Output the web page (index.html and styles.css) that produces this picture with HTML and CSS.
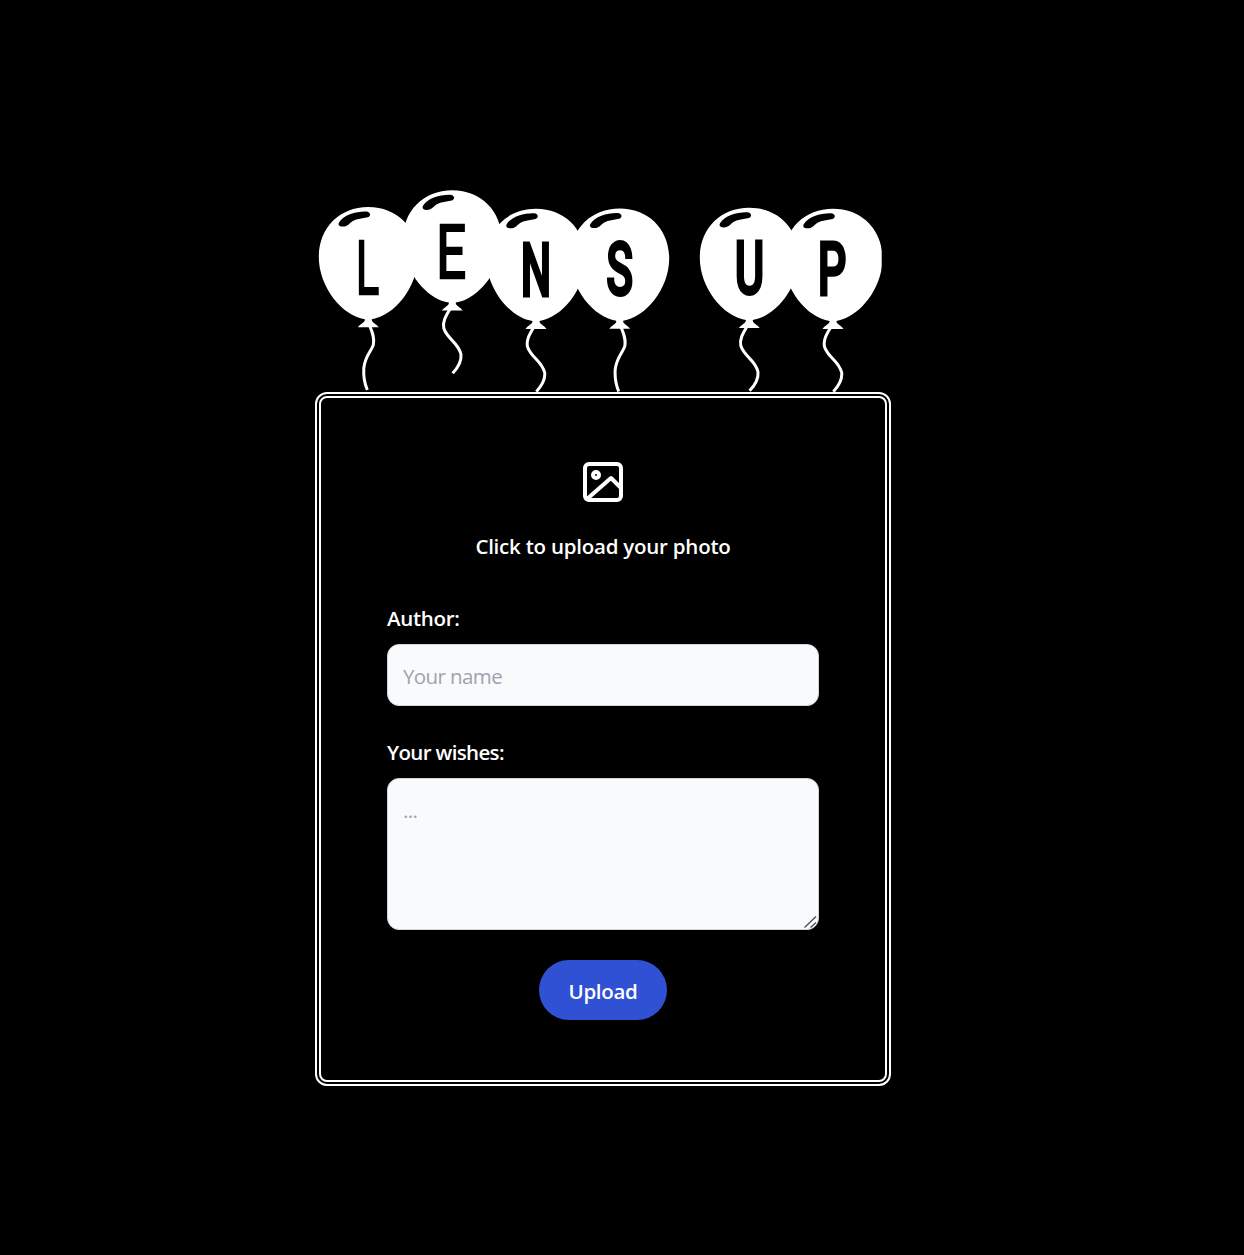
FILE: index.html
```html
<!DOCTYPE html>
<html lang="en">
<head>
<meta charset="utf-8">
<title>Lens Up</title>
<link rel="stylesheet" href="styles.css">
</head>
<body>
<main class="page">
  <svg class="logo" width="576" height="212" viewBox="315 180 576 212" role="img" aria-label="Lens Up">
    <defs>
      <g id="balloon">
        <path class="skin" d="M0 0C29 0 49.500 21 49.500 50C49.500 80 26 109 3.500 112.200C3 115.500 8 116.500 10.500 120.300H-10.500C-8 116.500 -3 115.500 -3.500 112.200C-26 109 -49.500 80 -49.500 50C-49.500 21 -29 0 0 0Z"/>
        <path class="ink" d="M-29.300 15.500C-25 8 -12 4.200 -2 4.500C2.500 4.900 3 9 -.5 10.200C-6 11.500 -11 11.500 -15.500 14C-19.500 17 -21 19.800 -26 19.600C-29.500 19.500 -30.300 17.500 -29.300 15.500Z"/>
      </g>
      <path id="string-right" class="string" d="M-2.500 119C-6 125 -10 131 -8.500 138C-5 149 6 152 8.700 164C9.500 172 5 178 .3 183"/>
      <path id="string-left" class="string" d="M1.500 119C4 125 6.500 131 5 138C2 146 -3 149 -4.500 161C-5 169 -3.500 177 -1 183"/>
      <clipPath id="edge"><rect x="315" y="180" width="566.700" height="212"/></clipPath>
    </defs>
    <g clip-path="url(#edge)">
      <g transform="translate(368.300 207)"><use href="#balloon"/><use href="#string-left"/></g>
      <g transform="translate(452.300 190.300)"><use href="#balloon"/><use href="#string-right"/></g>
      <g transform="translate(536 208.700)"><use href="#balloon"/><use href="#string-right"/></g>
      <g transform="translate(619.700 208.500)"><use href="#balloon"/><use href="#string-left"/></g>
      <g transform="translate(749.300 207.800)"><use href="#balloon"/><use href="#string-right"/></g>
      <g transform="translate(833 208.700)"><use href="#balloon"/><use href="#string-right"/></g>
    </g>
    <g class="letters">
      <text class="thin" transform="translate(367.500 294) scale(.58 1)">L</text>
      <text class="thin" transform="translate(451.300 277.700) scale(.71 1)">E</text>
      <text transform="translate(536 296) scale(.58 1)">N</text>
      <text transform="translate(619.700 294.800) scale(.6 1)">S</text>
      <text transform="translate(749.500 293.800) scale(.61 1)">U</text>
      <text transform="translate(832.200 295.300) scale(.61 1)">P</text>
    </g>
  </svg>
  <form class="card">
    <label class="picker">
      <svg width="48" height="48" viewBox="0 0 24 24" fill="none" stroke="currentColor" stroke-width="2" stroke-linejoin="round">
        <rect x="3" y="3" width="18" height="18" rx="2"/>
        <circle cx="8.500" cy="8.500" r="1.500"/>
        <path d="M21 15L16 10L4 20.500"/>
      </svg>
      <span class="picker-text">Click to upload your photo</span>
    </label>
    <label class="label author" for="author">Author:</label>
    <input class="field" id="author" type="text" placeholder="Your name">
    <label class="label wishes" for="wishes">Your wishes:</label>
    <div class="area">
      <textarea class="field" id="wishes" placeholder="..."></textarea>
      <svg class="grip" width="14" height="14" viewBox="0 0 14 14"><path d="M1.500 12.500L13 1.500M7.500 12.500L13 7.500"/></svg>
    </div>
    <button class="upload" type="button">Upload</button>
  </form>
</main>
</body>
</html>
```
FILE: styles.css
```css
* { box-sizing: border-box; }
body {
  margin: 0;
  background: #000;
  color: #fff;
  font: 600 20.5px/30px "Open Sans", "Noto Sans", sans-serif;
}
.page {
  width: 576px;
  min-height: 1255px;
  margin-left: 315px;
  padding-top: 180px;
}
.logo { display: block; }
.skin { fill: #fff; }
.ink, .letters { fill: #000; }
.string { fill: none; stroke: #fff; stroke-width: 3; }
.letters {
  font: 500 74px Roboto, sans-serif;
  text-anchor: middle;
}
.letters text {
  stroke: #000;
  stroke-width: 3px;
  stroke-linejoin: miter;
}
.letters .thin {
  font-weight: 400;
  stroke-width: 2.400px;
}
.card {
  display: flex;
  flex-direction: column;
  height: 694px;
  padding: 60px 66px;
  border: 6px double #fff;
  border-radius: 12px;
}
.picker {
  display: flex;
  flex-direction: column;
  align-items: center;
  gap: 25px;
}
.picker-text { letter-spacing: -.23px; }
.label { letter-spacing: -.3px; }
.author { margin-top: 42px; }
.wishes { margin-top: 31px; letter-spacing: -.65px; }
.field {
  display: block;
  width: 100%;
  height: 62px;
  margin: 11px 0 0;
  padding: 15px 15px 13px;
  border: 1px solid #d1d5db;
  border-radius: 12px;
  background: #f9fafb;
  color: #111827;
  font: 400 20.5px/30px "Open Sans", "Noto Sans", sans-serif;
  letter-spacing: -.6px;
  resize: none;
}
.field::placeholder { color: #9ca3af; opacity: 1; }
.area { position: relative; }
.area .field { height: 152px; padding-top: 16px; }
.grip {
  position: absolute;
  right: 2px;
  bottom: 1px;
  fill: none;
  stroke: #555;
  stroke-width: 1.5;
}
.upload {
  align-self: center;
  width: 128px;
  height: 60px;
  margin-top: 30px;
  padding: 1px 0 0;
  border: 0;
  border-radius: 30px;
  background: #3051d3;
  color: #fff;
  font: inherit;
  letter-spacing: -.3px;
}
```
